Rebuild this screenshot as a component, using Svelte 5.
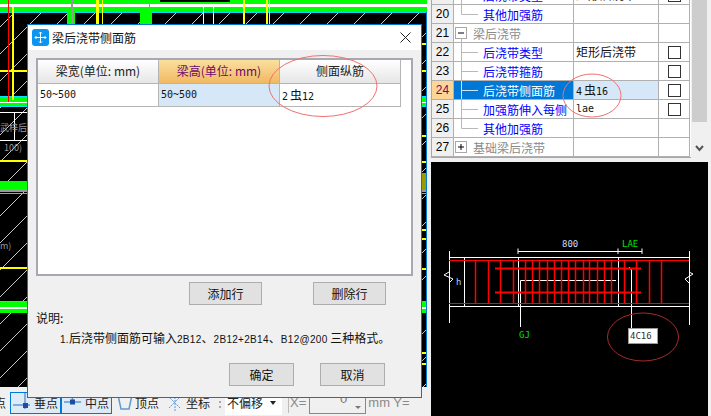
<script>
	// property rows of the right hand panel
	const rows = [
		{ no: 19, name: '后浇带类型', value: '矩形后浇带', check: true, kind: 'leaf' },
		{ no: 20, name: '其他加强筋', value: '', kind: 'end' },
		{ no: 21, name: '梁后浇带', value: '', kind: 'minus' },
		{ no: 22, name: '后浇带类型', value: '矩形后浇带', check: true, kind: 'leaf' },
		{ no: 23, name: '后浇带箍筋', value: '', check: true, kind: 'leaf' },
		{ no: 24, name: '后浇带侧面筋', bar: ['4', '16'], check: true, kind: 'leaf', active: true },
		{ no: 25, name: '加强筋伸入每侧', value: 'lae', check: true, kind: 'leaf', mono: true },
		{ no: 26, name: '其他加强筋', value: '', kind: 'end' },
		{ no: 27, name: '基础梁后浇带', value: '', kind: 'plus' }
	];

	// stirrups in the preview drawing
	const stirrups = [475, 488, 500, 513, 525, 532, 539, 547, 554, 561, 568, 575, 583, 589, 597, 604, 611, 624, 636, 649, 661];

	// horizontal beam bands of the cad drawing: [y, height, colour]
	const bands = [
		[0, 4, '#00ff00'], [4, 3, '#ffffff'], [7, 5, '#00ff00'], [12, 1, '#00d8ff'],
		[96, 1, '#00e5ff'], [97, 5, '#00ff00'], [102, 1, '#ffffff'], [103, 3, '#00ff00'], [106, 1, '#00e5ff'],
		[181, 8, '#00ff00'], [189, 3, '#999999'], [193, 1, '#00e5ff'],
		[301, 1, '#00e5ff'], [302, 5, '#00ff00'], [307, 2, '#ffffff'], [309, 4, '#00ff00']
	];
	const yellowTicks = [43, 70, 135, 161, 229, 238, 268, 352, 363];
</script>

<div class="screen">
	<div class="left">
		<svg class="cad" width="427" height="387" viewBox="0 0 427 387">
			<defs>
				<pattern id="hatch" width="27" height="27" patternUnits="userSpaceOnUse">
					<path d="M0 27L27 0" stroke="#c8c8c8" stroke-width="1" />
				</pattern>
			</defs>
			<rect width="427" height="387" fill="#000" />
			<rect width="427" height="387" fill="url(#hatch)" />
			{#each bands as b}
				<rect x="0" y={b[0]} width="427" height={b[1]} fill={b[2]} />
			{/each}
			<rect x="160" y="0" width="70" height="2" fill="#000" />
			<rect x="67" y="12" width="8" height="12" fill="#00ff00" />
			<rect x="71" y="0" width="2" height="24" fill="#999" />
			<rect x="140" y="12" width="12" height="12" fill="#00ff00" />
			<rect x="149" y="0" width="1" height="24" fill="#999" />
			<rect x="203" y="5" width="1" height="19" fill="#fff" />
			<rect x="213" y="5" width="1" height="19" fill="#fff" />
			<rect x="96" y="0" width="3" height="24" fill="#ffff00" />
			<rect x="102" y="0" width="1" height="24" fill="#ffff00" />
			<rect x="243" y="0" width="2" height="24" fill="#ffff00" />
			<rect x="266" y="0" width="2" height="24" fill="#ffff00" />
			<rect x="269" y="0" width="1" height="24" fill="#ffff00" />
			<rect x="12" y="7" width="2" height="93" fill="#ffff00" />
			<rect x="0" y="70" width="27" height="2" fill="#ffff00" />
			<rect x="8" y="0" width="1" height="102" fill="#ff0000" />
			<rect x="0" y="112" width="27" height="1" fill="#fff" />
			<rect x="0" y="140" width="27" height="1" fill="#fff" />
			<rect x="14" y="112" width="1" height="28" fill="#fff" />
			<rect x="0" y="160" width="27" height="2" fill="#ffff00" />
			<rect x="0" y="267" width="27" height="2" fill="#ffff00" />
			<rect x="422" y="173" width="5" height="17" fill="#999900" />
			{#each yellowTicks as y}
				<rect x="422" {y} width="5" height="2" fill="#ffff00" />
			{/each}
			<rect x="426" y="12" width="1" height="375" fill="#0078d7" />
			<text class="cad-label" x="0" y="131">武梓后</text>
			<text class="cad-label" x="4" y="151">100)</text>
			<text class="cad-label" x="0" y="249">m)</text>
		</svg>

		<div class="status">
			<span class="tool-text cut">点</span>
			<div class="snap on">
				<svg width="22" height="20" viewBox="0 0 22 20">
					<path d="M1 12H18M13 0V16" stroke="#5b9bd5" stroke-width="1.500" fill="none" />
					<rect x="11" y="10" width="5" height="5" fill="#1f4e9c" />
				</svg>
				<span class="tool-text">垂点</span>
			</div>
			<div class="snap on">
				<svg width="22" height="20" viewBox="0 0 22 20">
					<path d="M1 9H18M9.500 0V10" stroke="#5b9bd5" stroke-width="1.500" fill="none" />
					<rect x="7" y="6.500" width="5" height="5" fill="#1f4e9c" />
				</svg>
				<span class="tool-text">中点</span>
			</div>
			<div class="snap">
				<svg width="18" height="20" viewBox="0 0 18 20">
					<path d="M1 2L4 16H12L15 2" stroke="#5b9bd5" stroke-width="1.500" fill="none" />
				</svg>
				<span class="tool-text">顶点</span>
			</div>
			<div class="snap">
				<svg width="20" height="20" viewBox="0 0 20 20">
					<path d="M2 3L14 15M15 3L3 15M9 1V19" stroke="#5b9bd5" stroke-width="1" stroke-dasharray="2 1" fill="none" />
				</svg>
				<span class="tool-text">坐标</span>
			</div>
			<span class="grip"></span>
			<div class="combo">
				<span class="tool-text">不偏移</span>
				<span class="combo-arrow"></span>
			</div>
			<span class="sep"></span>
			<span class="tool-text faded">X=</span>
			<div class="num-input"><span>0</span><i></i></div>
			<span class="tool-text faded">mm Y=</span>
		</div>
	</div>

	<div class="right">
		<div class="panel">
			<div class="table">
				{#each rows as r}
					<div class="row" class:active={r.active}>
						<div class="no">{r.no}</div>
						<div class="name" class:group={r.kind === 'minus' || r.kind === 'plus'}>
							<svg class="tree" width="29" height="18" viewBox="0 0 29 18">
								{#if r.kind === 'leaf'}
									<path d="M7.500 0V18M7.500 9.500H24" stroke={r.active ? '#cfe4f7' : '#b8b8b8'} fill="none" />
								{:else if r.kind === 'end'}
									<path d="M7.500 0V9.500H24" stroke="#b8b8b8" fill="none" />
								{:else}
									<rect x="1.500" y="3.500" width="11" height="11" fill="#fff" stroke="#a8a8a8" />
									<path d="M4 9H10" stroke="#000" fill="none" />
									{#if r.kind === 'plus'}
										<path d="M7 6V12" stroke="#000" fill="none" />
									{:else}
										<path d="M7.500 14.500V18" stroke="#b8b8b8" fill="none" />
									{/if}
								{/if}
							</svg>
							<span>{r.name}</span>
						</div>
						<div class="value" class:mono={r.mono || r.bar}>
							{#if r.bar}
								{r.bar[0]}<span class="bar">虫</span>{r.bar[1]}
							{:else}
								{r.value}
							{/if}
						</div>
						<div class="check">
							{#if r.check}<span class="box"></span>{/if}
						</div>
					</div>
				{/each}
			</div>
			<div class="scroll">
				<div class="thumb"></div>
				<svg class="chevron" width="9" height="7" viewBox="0 0 9 7">
					<path d="M1 1L4.500 5L8 1" stroke="#555" stroke-width="2" fill="none" />
				</svg>
			</div>
		</div>

		<div class="preview">
			<svg width="277" height="254" viewBox="431 162 277 254">
				<g stroke="#fff" fill="none">
					<path d="M449.500 251V323M689.500 251V325" />
					<path d="M449 257.500H689M449 306.500H689" />
					<path d="M518.500 257V306M618.500 257V306M464.500 257V306" />
					<path d="M518 251.500H642M518 248.500V254M618 248.500V254M642 248.500V254" />
					<path d="M520.500 327V280.500H616" />
					<path d="M631.500 328V270L629 267" />
					<path d="M449 272L444 275L453 279L449 283M689 272L693 274L685 279L689 283" />
				</g>
				<g stroke="#ff0000" fill="none">
					<path d="M449 260.500H689M449 303.500H689" />
					{#each stirrups as x}
						<path d="M{x}.5 261V303" stroke-width="1.500" />
					{/each}
					<path d="M495 268.500H641M495 292.500H641" stroke-width="2" />
				</g>
				<text class="pv-text" x="562" y="247" fill="#c8dcff">800</text>
				<text class="pv-text" x="622" y="247" fill="#00e000">LAE</text>
				<text class="pv-text" x="519" y="338" fill="#00e000">GJ</text>
				<text class="pv-text" x="456" y="285" fill="#a8d0ff">h</text>
				<rect x="628.500" y="328.500" width="29" height="15" fill="#fff" stroke="#999" />
				<text class="pv-text" x="630" y="339" fill="#333">4C16</text>
				<ellipse cx="643" cy="337" rx="35.500" ry="24" fill="none" stroke="#a82a2a" />
			</svg>
		</div>
	</div>

	<div class="dialog">
		<div class="title">
			<svg width="17" height="17" viewBox="0 0 17 17">
				<rect width="17" height="17" rx="3" fill="#0a95f0" />
				<path d="M8.500 3V14M3 8.500H14M8.500 3L7 4.500M8.500 3L10 4.500M8.500 14L7 12.500M8.500 14L10 12.500M3 8.500L4.500 7M3 8.500L4.500 10M14 8.500L12.500 7M14 8.500L12.500 10" stroke="#fff" fill="none" />
			</svg>
			<span class="title-text">梁后浇带侧面筋</span>
			<svg class="close" width="11" height="11" viewBox="0 0 11 11">
				<path d="M0.500 0.500L10.500 10.500M10.500 0.500L0.500 10.500" stroke="#222" fill="none" />
			</svg>
		</div>
		<div class="body">
			<div class="grid">
				<div class="grid-row">
					<div class="head">梁宽(单位: mm)</div>
					<div class="head hot">梁高(单位: mm)</div>
					<div class="head">侧面纵筋</div>
				</div>
				<div class="grid-row">
					<div class="cell">50~500</div>
					<div class="cell sel">50~500</div>
					<div class="cell">2<span class="bar">虫</span>12</div>
				</div>
			</div>
			<div class="row-buttons">
				<button>添加行</button>
				<button>删除行</button>
			</div>
			<p class="note-title">说明:</p>
			<p class="note">
				<span class="lat">1.</span>后浇带侧面筋可输入<span class="lat">2B12</span>、<span class="lat">2B12+2B14</span>、<span class="lat">B12@200</span> 三种格式。
			</p>
			<div class="foot">
				<button>确定</button>
				<button>取消</button>
			</div>
		</div>
	</div>

	<svg class="marks" width="711" height="416" viewBox="0 0 711 416">
		<ellipse cx="323" cy="86" rx="54" ry="30.500" fill="none" stroke="#f07070" />
		<ellipse cx="592" cy="95.500" rx="29" ry="21.500" fill="none" stroke="#f07070" />
	</svg>
</div>

<style>
	:global(body) {
		margin: 0;
	}

	.screen {
		position: relative;
		display: flex;
		width: 711px;
		height: 416px;
		overflow: hidden;
		background: #f0f0f0;
		font-family: "Noto Sans CJK SC", "Liberation Sans", sans-serif;
		font-size: 12px;
		color: #000;
	}

	.left {
		display: flex;
		flex-direction: column;
		flex: none;
		width: 431px;
	}

	.cad {
		display: block;
	}

	.cad-label {
		font-size: 9px;
		fill: #999;
	}

	.status {
		display: flex;
		align-items: center;
		height: 29px;
		padding-top: 2px;
		box-sizing: border-box;
		white-space: nowrap;
	}

	.tool-text {
		font-size: 12px;
		line-height: 16px;
		color: #222;
	}

	.cut {
		flex: none;
		width: 16px;
		margin-left: -6px;
	}

	.snap {
		display: flex;
		align-items: center;
		flex: none;
		height: 22px;
		padding: 0 1px;
		margin-left: 3px;
		box-sizing: border-box;
		border: 1px solid transparent;
	}

	.snap.on {
		width: 51px;
		margin-left: 0;
		background: #deebf6;
		border-color: #0078d7;
	}

	.snap svg {
		flex: none;
	}

	.grip {
		flex: none;
		width: 2px;
		height: 14px;
		margin: 0 4px 0 7px;
		background: repeating-linear-gradient(#aaa 0 2px, transparent 2px 5px);
	}

	.combo {
		display: flex;
		align-items: center;
		justify-content: space-between;
		flex: none;
		width: 57px;
		height: 24px;
		padding: 0 6px 0 2px;
		box-sizing: border-box;
		background: #fff;
	}

	.combo-arrow {
		border: 3px solid transparent;
		border-top: 4px solid #222;
		border-bottom: 0;
	}

	.sep {
		flex: none;
		width: 1px;
		height: 20px;
		margin: 0 1px 0 6px;
		background: #bbb;
	}

	.faded {
		color: #8a8a8a;
		font-family: "Liberation Sans", sans-serif;
		font-size: 13px;
	}

	.num-input {
		position: relative;
		display: flex;
		justify-content: flex-end;
		flex: none;
		width: 57px;
		height: 22px;
		margin: 0 2px 0 3px;
		padding-right: 18px;
		box-sizing: border-box;
		border: 1px solid #888;
		border-top: 0;
		color: #777;
		font-family: "Liberation Sans", sans-serif;
		font-size: 13px;
		line-height: 14px;
	}

	.num-input i {
		position: absolute;
		right: 4px;
		bottom: 4px;
		border: 3px solid transparent;
		border-top: 3px solid #777;
		border-bottom: 0;
	}

	.right {
		display: flex;
		flex-direction: column;
		width: 277px;
	}

	.panel {
		display: flex;
		align-items: flex-end;
		flex: none;
		height: 162px;
		padding-bottom: 4px;
		box-sizing: border-box;
		overflow: hidden;
	}

	.table {
		flex: none;
		width: 260px;
		background: #fff;
		border-left: 1px solid #a8a8a8;
		border-bottom: 1px solid #a8a8a8;
		box-sizing: border-box;
	}

	.row {
		display: grid;
		grid-template-columns: 22px 120px 85px 31px;
		height: 19px;
	}

	.row > div {
		box-sizing: border-box;
		border-right: 1px solid #b0b0b0;
		border-bottom: 1px solid #b0b0b0;
		white-space: nowrap;
		overflow: hidden;
	}

	.no {
		background: #f0f0f0;
		text-align: center;
		font-family: "Liberation Sans", sans-serif;
		font-size: 12px;
		line-height: 18px;
	}

	.name {
		display: flex;
		align-items: center;
		color: #0000ff;
		font-size: 12px;
		line-height: 18px;
	}

	.name span {
		padding-top: 1px;
	}

	.name.group {
		color: #8a8a8a;
	}

	.name.group .tree {
		margin-right: -10px;
	}

	.tree {
		flex: none;
	}

	.value {
		padding-left: 2px;
		line-height: 18px;
		font-size: 12px;
		color: #111;
	}

	.value.mono {
		font-family: "DejaVu Sans Mono", "Noto Sans CJK SC", monospace;
		font-size: 10px;
	}

	.bar {
		margin: 0 0 0 2px;
		font-family: "Noto Sans CJK SC", sans-serif;
		font-size: 12px;
	}

	.check {
		display: flex;
		align-items: center;
		justify-content: center;
	}

	.box {
		width: 11px;
		height: 11px;
		border: 1px solid #333;
		background: #fff;
	}

	.row.active .no {
		background: #fcd597;
		color: #6b0a6b;
	}

	.row.active .name {
		background: #0078d7;
		color: #fff;
	}

	.row.active .value {
		background: #d6e8f7;
	}

	.scroll {
		position: relative;
		flex: none;
		width: 15px;
		height: 158px;
		margin-left: 1px;
		background: #f0f0f0;
	}

	.thumb {
		height: 122px;
		background: #cdcdcd;
	}

	.chevron {
		position: absolute;
		left: 3px;
		bottom: 6px;
	}

	.preview {
		flex: 1;
		background: #000;
	}

	.preview svg {
		display: block;
	}

	.pv-text {
		font-family: "DejaVu Sans Mono", monospace;
		font-size: 9px;
	}

	.dialog {
		position: absolute;
		left: 27px;
		top: 24px;
		display: flex;
		flex-direction: column;
		width: 395px;
		height: 374px;
		box-sizing: border-box;
		background: #f0f0f0;
		border: 1px solid #0078d7;
	}

	.title {
		display: flex;
		align-items: center;
		flex: none;
		height: 25px;
		padding: 0 10px 0 4px;
		background: #fff;
	}

	.title-text {
		margin-left: 3px;
		font-size: 12px;
		line-height: 16px;
		color: #111;
	}

	.close {
		margin-left: auto;
	}

	.body {
		display: flex;
		flex-direction: column;
		flex: 1;
		padding: 8px 8px 11px;
	}

	.grid {
		flex: none;
		height: 218px;
		box-sizing: border-box;
		background: #fff;
		border: 2px solid #a8a8b0;
	}

	.grid-row {
		display: grid;
		grid-template-columns: 121px 121px 121px;
		border-bottom: 1px solid #b5b5b5;
		width: 363px;
	}

	.grid-row > div {
		box-sizing: border-box;
		border-right: 1px solid #b5b5b5;
	}

	.head {
		height: 23px;
		text-align: center;
		line-height: 22px;
		font-size: 12px;
		color: #222;
		background: linear-gradient(#ffffff, #e6e6e6);
	}

	.head.hot {
		color: #6b0a6b;
		background: linear-gradient(#fbdf9f, #f0b962);
	}

	.cell {
		height: 22px;
		padding-left: 2px;
		line-height: 22px;
		font-family: "DejaVu Sans Mono", "Noto Sans CJK SC", monospace;
		font-size: 10px;
		color: #111;
	}

	.cell.sel {
		background: #d6e8f7;
	}

	button {
		padding: 0;
		box-sizing: border-box;
		background: #e1e1e1;
		border: 1px solid #adadad;
		font: inherit;
		font-size: 12px;
		color: #111;
	}

	.row-buttons {
		display: flex;
		flex: none;
		gap: 51px;
		margin: 6px 0 0 153px;
	}

	.row-buttons button {
		width: 73px;
		height: 23px;
	}

	.note-title {
		margin: 4px 0 0;
		font-size: 12px;
		line-height: 18px;
		color: #111;
	}

	.note {
		margin: 2px 0 0 24px;
		font-size: 12px;
		line-height: 18px;
		color: #111;
		white-space: nowrap;
	}

	.lat {
		font-family: "Liberation Sans", sans-serif;
		font-size: 10px;
		letter-spacing: 0.3px;
	}

	.foot {
		display: flex;
		flex: none;
		gap: 26px;
		margin: auto 0 0 193px;
	}

	.foot button {
		width: 65px;
		height: 23px;
	}

	.marks {
		position: absolute;
		left: 0;
		top: 0;
		pointer-events: none;
	}
</style>
